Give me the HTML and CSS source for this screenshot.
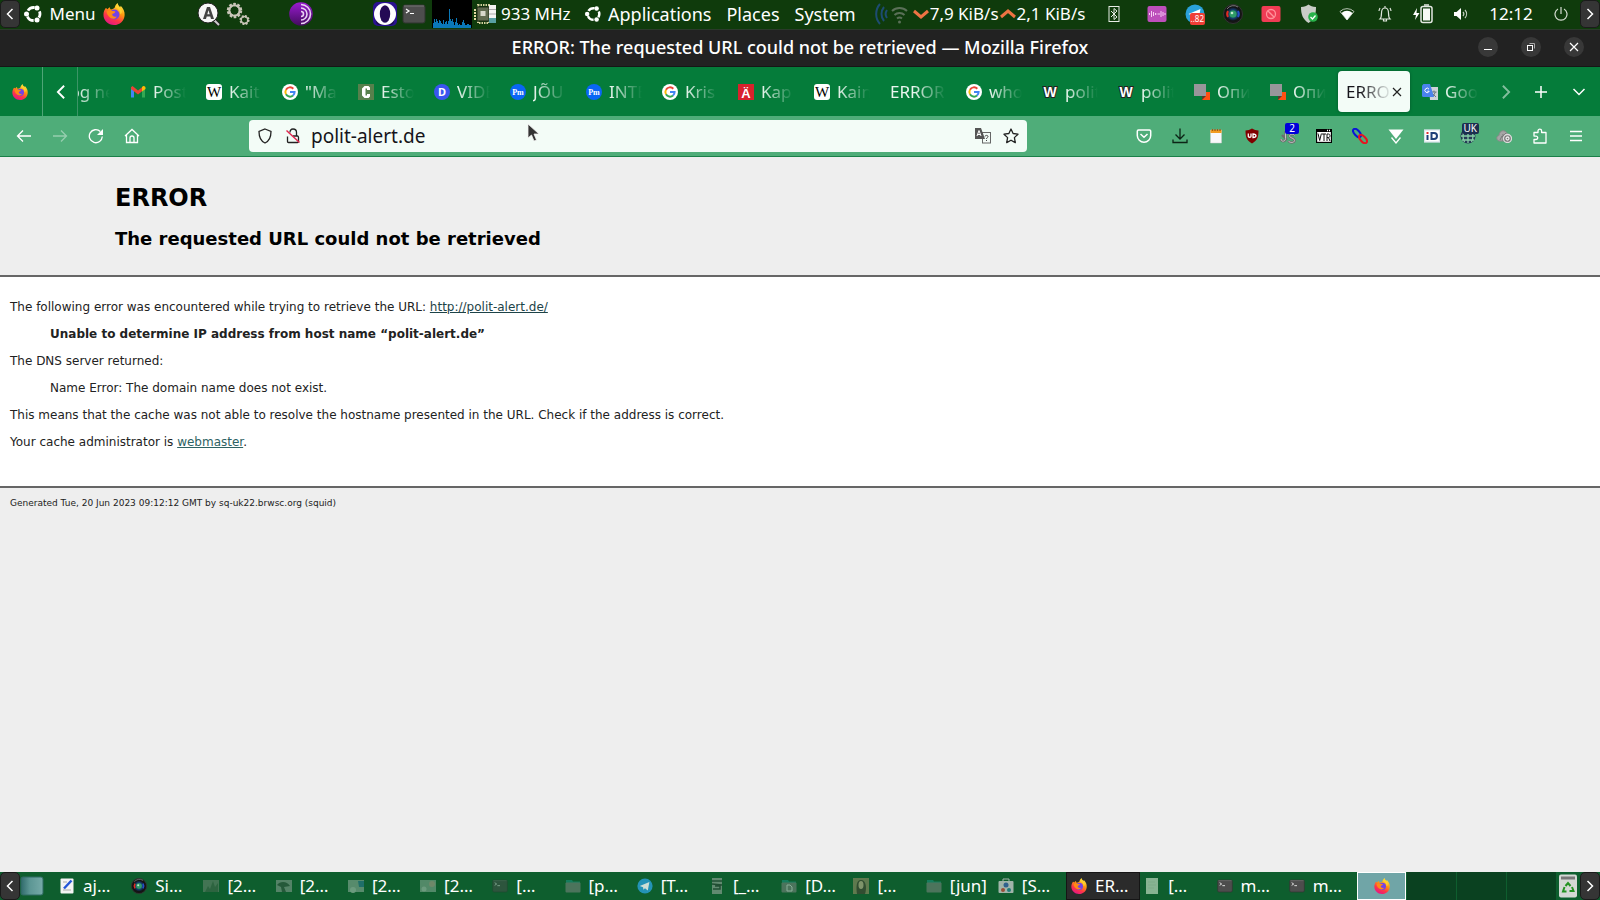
FILE: index.html
```html
<!DOCTYPE html>
<html lang="en">

<head>
  <meta charset="utf-8">
  <meta name="viewport" content="width=device-width, initial-scale=1.0" />
  <title>ERROR: The requested URL could not be retrieved</title>
  <link rel="stylesheet" href="styles.css">
</head>

<body>
  <!-- shared icons -->
  <svg class="defs" width="0" height="0">
    <defs>
      <linearGradient id="ff-body" x1="0.8" y1="0" x2="0.3" y2="1">
        <stop offset="0" stop-color="#fff44f" />
        <stop offset="0.4" stop-color="#ff980e" />
        <stop offset="0.7" stop-color="#ff3647" />
        <stop offset="1" stop-color="#e31587" />
      </linearGradient>
      <linearGradient id="tor-bg" x1="0" y1="0" x2="0" y2="1">
        <stop offset="0" stop-color="#9a1bd0" />
        <stop offset="1" stop-color="#420c5d" />
      </linearGradient>
      <linearGradient id="desk-bg" x1="0" y1="0" x2="1" y2="0">
        <stop offset="0" stop-color="#2f6a6b" />
        <stop offset="0.4" stop-color="#5c9694" />
        <stop offset="1" stop-color="#76aaa8" />
      </linearGradient>
      <radialGradient id="lens">
        <stop offset="0" stop-color="#b9e4c0" />
        <stop offset="0.3" stop-color="#1c8a55" />
        <stop offset="0.65" stop-color="#143a6b" />
        <stop offset="1" stop-color="#101010" />
      </radialGradient>
    </defs>
    <symbol id="firefox" viewBox="0 0 24 24">
      <path fill="url(#ff-body)" d="M3 5.500c.8.200 1.400.700 2 1.300.6-1.200 1.500-1.900 2.500-2.300 0 1 .3 1.800 1 2.500 2-.5 3.300-.8 4.300-2.200C13.200 3 14.200 1.500 16 0c.2 2 1.300 3.100 2.800 4.600l.5-1.600c2.700 2.700 4.500 6 4.300 10C23.400 19.300 18.400 24 12 24S.5 19.200.5 12.800C.5 10 1.500 7.500 3 5.500z" />
      <circle cx="12.500" cy="12.500" r="5.500" fill="#7542e5" />
      <path fill="#ff8a16" d="M4 9c2-1.600 4.300-1.500 6-.2 1.500.2 2.800.2 3.500.7-.6 1.600-2.400 2-3.500 2.400.2 2.500 2.200 3.600 5 2.700-1 3-5.800 3.500-8.300.5C5 13.300 4 11.400 4 9z" />
      <path fill="#ffd22f" d="M13.500 4.500c3 1 5.500 3.500 5.500 8 1.500-1 1.800-3 1.500-4.500C19.500 6 17 5 16 2c-1 .8-1.800 1.500-2.500 2.500z" />
    </symbol>
    <symbol id="ubuntu" viewBox="0 0 20 20">
      <circle cx="10.500" cy="10" r="6.500" fill="none" stroke="#fff" stroke-width="2.800" stroke-dasharray="7.600 6.010" stroke-dashoffset="3.800" />
      <circle cx="3.500" cy="10" r="2.500" fill="#fff" />
      <circle cx="14" cy="4" r="2.500" fill="#fff" />
      <circle cx="14" cy="16" r="2.500" fill="#fff" />
    </symbol>
    <symbol id="chev-left" viewBox="0 0 16 16">
      <path d="M10.500 3l-5 5 5 5" fill="none" stroke="currentColor" stroke-width="1.500" />
    </symbol>
    <symbol id="chev-right" viewBox="0 0 16 16">
      <path d="M5.500 3l5 5-5 5" fill="none" stroke="currentColor" stroke-width="1.500" />
    </symbol>
    <symbol id="terminal" viewBox="0 0 24 20">
      <rect x="1" y="1" width="22" height="18" rx="2" fill="#4d4d4d" stroke="#303530" />
      <path d="M2 2h20" stroke="#777" />
      <path d="M4 5l3 2-3 2M8 9.500h4" fill="none" stroke="#fff" stroke-width="1.200" />
    </symbol>
    <symbol id="camera" viewBox="0 0 20 20">
      <circle cx="10" cy="10" r="9.500" fill="#151515" stroke="#333" />
      <circle cx="10" cy="10" r="7" fill="url(#lens)" />
      <circle cx="10" cy="10" r="3.500" fill="#2f9a68" />
      <circle cx="9" cy="9" r="1.300" fill="#c3ead0" />
      <path d="M5 7a6 6 0 0 0 0 6" fill="none" stroke="#e02c20" stroke-width="2" />
      <path d="M15 7a6 6 0 0 1 0 6" fill="none" stroke="#2450c8" stroke-width="2" />
      <path d="M4 5a8 8 0 0 1 11-2" fill="none" stroke="#777" />
    </symbol>
    <symbol id="telegram" viewBox="0 0 20 20">
      <circle cx="10" cy="10" r="9.500" fill="#2aa1da" />
      <path d="M3.500 10L15.500 5l-2 10.500-3.500-2.600-2 1.800-.4-3.200z" fill="#fff" />
    </symbol>
    <symbol id="google" viewBox="0 0 16 16">
      <circle cx="8" cy="8" r="8" fill="#fff" />
      <path d="M11.300 4.700A4.600 4.600 0 0 0 4 5.700" fill="none" stroke="#ea4335" stroke-width="2" />
      <path d="M4 5.700a4.600 4.600 0 0 0 0 4.600" fill="none" stroke="#fbbc05" stroke-width="2" />
      <path d="M4 10.300a4.600 4.600 0 0 0 7 1.200" fill="none" stroke="#34a853" stroke-width="2" />
      <path d="M8 8h4.600a4.600 4.600 0 0 1-1.600 3.500" fill="none" stroke="#4285f4" stroke-width="2" />
    </symbol>
    <symbol id="folder" viewBox="0 0 16 16">
      <path d="M1 2h6l1 1.500h7V6H1z" fill="#1e9c8c" />
      <rect x="0.500" y="4.500" width="15" height="10" rx="1" fill="#8b8b8b" />
    </symbol>
    <symbol id="overlap" viewBox="0 0 16 16">
      <path d="M8 8h8v8H8z" fill="#ff4f12" />
      <path d="M0 0h12v12H0z" fill="#98969a" />
      <path d="M8 12h4l-4 4z" fill="#5a3a30" />
    </symbol>
  </svg>

  <div class="desktop">
    <header class="panel">
      <button class="panel-arrow" aria-label="Hide panel"><svg width="16" height="16"><use href="#chev-left" /></svg></button>
      <button class="panel-menu main-menu"><svg width="20" height="20"><use href="#ubuntu" /></svg>Menu</button>
      <div class="launchers after-firefox">
        <button class="launcher" aria-label="Firefox"><svg width="22" height="22"><use href="#firefox" /></svg></button>
      </div>
      <div class="launchers after-gears">
        <button class="launcher" aria-label="Search">
          <svg width="24" height="24" viewBox="0 0 24 24"><path d="M17 18l5 5" stroke="#222" stroke-width="4" /><path d="M17 18l5 5" stroke="#ccc" stroke-width="2" /><circle cx="11" cy="11" r="10" fill="#f7f7f7" stroke="#222" /><path d="M6 17l4-12h3l4 12h-3l-.7-2.500H9.700L9 17zM10.300 12.200h2.400l-1.200-4z" fill="#444" fill-rule="evenodd" /></svg>
        </button>
        <button class="launcher" aria-label="Settings">
          <svg width="24" height="24" viewBox="0 0 24 24"><g fill="none"><circle cx="8.500" cy="8.500" r="6" stroke="#c9c5b8" stroke-width="3.500" stroke-dasharray="2.400 1.370" /><circle cx="8.500" cy="8.500" r="5.200" stroke="#c9c5b8" stroke-width="2" /><circle cx="18.500" cy="18" r="3.800" stroke="#c9c5b8" stroke-width="2.600" stroke-dasharray="1.700 1.280" /><circle cx="18.500" cy="18" r="3.400" stroke="#c9c5b8" stroke-width="1.500" /></g></svg>
        </button>
      </div>
      <div class="launchers after-tor">
        <button class="launcher" aria-label="Tor Browser">
          <svg width="24" height="24" viewBox="0 0 24 24"><circle cx="12" cy="12" r="11.800" fill="url(#tor-bg)" /><path d="M12 2.500a9.500 9.500 0 0 1 0 19M12 6a6 6 0 0 1 0 12M12 9.500a2.500 2.500 0 0 1 0 5" fill="none" stroke="#e8d2f2" stroke-width="1.600" /></svg>
        </button>
      </div>
      <div class="launchers">
        <button class="launcher" aria-label="Opera">
          <svg width="24" height="24" viewBox="0 0 24 24"><rect width="24" height="24" rx="5" fill="#2a1290" /><rect x="3" y="6" width="18" height="17" rx="4" fill="#1a0950" /><circle cx="12" cy="12" r="11" fill="#fff" /><ellipse cx="12" cy="12" rx="5.200" ry="8.800" fill="#240a55" /></svg>
        </button>
        <button class="launcher" aria-label="Terminal"><svg width="24" height="20"><use href="#terminal" /></svg></button>
      </div>
      <svg class="load-graph" width="40" height="28" viewBox="0 0 40 28"><rect width="40" height="28" fill="#000" /><path fill="#0a78b8" d="M1 28v-5h1v-4h1v3h1v-3h1v2h1v2h1v-3h1v1h1v2h1v1h1v-4h1v4h1v-2h1v-1h1v3h1v-3h1V9h1v10h1v2h1v-2h1v3h1v3h1v-3h1v-4h1v5h1v2h1v-1h1v1h2v-3h1v-2h1v3h1v2h2v-1h2v1h2v3z" /></svg>
      <div class="cpu">
        <svg width="23" height="20" viewBox="0 0 23 20"><path d="M4 1h11v18H4z" fill="none" stroke="#d3cf9c" stroke-width="2" stroke-dasharray="1.500 1" /><path d="M1 5v11" stroke="#e4dca5" stroke-width="2" stroke-dasharray="2 1" /><rect x="3" y="3" width="12" height="14" fill="#606a50" stroke="#1d2a12" /><rect x="6.500" y="7" width="5" height="5" fill="#d7d7cb" /><path d="M15 1h7v18h-7z" fill="#f4f4f2" /><path d="M15 14h7v5h-7z" fill="#58a0a3" /><path d="M15 5.500h7M15 10h7" stroke="#aaa" /></svg>
        <span>933 MHz</span>
      </div>
      <nav class="panel-nav">
        <button class="panel-menu"><svg width="18" height="18"><use href="#ubuntu" /></svg>Applications</button>
        <button class="panel-menu">Places</button>
        <button class="panel-menu">System</button>
      </nav>
      <div class="network">
        <svg width="36" height="24" viewBox="0 0 36 24" fill="none"><path d="M6 2a15 15 0 0 0 0 20M10 5a11 11 0 0 0 0 14M13 8a7 7 0 0 0 0 8" stroke="#1d4c72" stroke-width="2" /><path d="M18 9a11 11 0 0 1 15 0M20.500 13a7 7 0 0 1 10 0M23 16.500a4 4 0 0 1 5 0" stroke="#5b7058" stroke-width="2" /><circle cx="25.500" cy="20" r="1.500" fill="#5b7058" /></svg>
        <svg width="16" height="16" viewBox="0 0 16 16"><path d="M1 5l7 6 7-6" fill="none" stroke="#ee7343" stroke-width="3" /></svg>
        <span>7,9 KiB/s</span>
        <svg width="16" height="16" viewBox="0 0 16 16"><path d="M1 11l7-6 7 6" fill="none" stroke="#ee7343" stroke-width="3" /></svg>
        <span>2,1 KiB/s</span>
      </div>
      <div class="tray">
        <button class="tray-item" aria-label="Bluetooth"><svg width="12" height="18" viewBox="0 0 12 18" fill="none" stroke="#e8ede6"><rect x="1" y="1.500" width="10" height="15" /><path d="M3 6l6 6-3 2.500v-11L9 6l-6 6" /></svg></button>
        <button class="tray-item" aria-label="Audio"><svg width="20" height="18" viewBox="0 0 20 18"><rect x="0.500" y="1" width="19" height="16" rx="2" fill="#bd4fbb" /><path d="M2.500 8v2M4.500 6v6M6.500 7v4M8.500 8v2M10 8.500v1M12 8v2M14 6v6M16 7v4M18 8v2" stroke="#f5cdf2" /></svg></button>
        <button class="tray-item telegram-item" aria-label="Telegram"><svg width="20" height="20"><use href="#telegram" /></svg><span class="tray-badge">..82</span></button>
        <button class="tray-item" aria-label="Camera"><svg width="20" height="20"><use href="#camera" /></svg></button>
        <button class="tray-item" aria-label="Blocked"><svg width="20" height="18" viewBox="0 0 20 18"><rect x="0.500" y="1" width="19" height="16" rx="2" fill="#ef3c54" /><circle cx="10" cy="9" r="4.500" fill="none" stroke="#ff929b" stroke-width="1.300" /><path d="M7 6l6 6" stroke="#ff929b" stroke-width="1.300" /></svg></button>
        <button class="tray-item" aria-label="Security"><svg width="18" height="20" viewBox="0 0 18 20"><path d="M8.500 0.500c2 1.500 4 2.500 7.500 2.500 0 7-1.500 12-7.500 16C2.500 15 1 10 1 3c3.500 0 5.500-1 7.500-2.500z" fill="#c9ccc7" /><circle cx="13" cy="13" r="4.800" fill="#28b24a" /><path d="M10.500 13l2 2 3-3.500" fill="none" stroke="#fff" stroke-width="1.300" /></svg></button>
        <button class="tray-item" aria-label="Wifi"><svg width="16" height="14" viewBox="0 0 16 14"><path d="M1 4.500a10 10 0 0 1 14 0L8 13z" fill="none" stroke="#b8c4b5" /><path d="M2.500 6a8 8 0 0 1 11 0L8 13z" fill="#fff" /></svg></button>
        <button class="tray-item" aria-label="Notifications"><svg width="14" height="18" viewBox="0 0 14 18" fill="none" stroke="#dfe6dc" stroke-width="1.200"><path d="M2 14c1.500-1.500 1.500-3 1.500-6C3.500 5 5 3 7 3s3.500 2 3.500 5c0 3 0 4.500 1.500 6zM7 1v2M5.500 14v2h3v-2M1 6c0-1 .5-2 1-3M13 6c0-1-.5-2-1-3" /></svg></button>
        <button class="tray-item" aria-label="Battery"><svg width="22" height="20" viewBox="0 0 22 20"><path d="M5 4L1 11h3l-1 5 4.500-7H4.500z" fill="#fff" /><rect x="9" y="2.500" width="11" height="16" rx="2" fill="none" stroke="#e4e8e2" stroke-width="1.500" /><path d="M11 4.500h7v12h-7z" fill="#f6f8f5" /><path d="M12 1h5" stroke="#e4e8e2" stroke-width="1.500" /></svg></button>
        <button class="tray-item" aria-label="Volume"><svg width="16" height="14" viewBox="0 0 16 14"><path d="M1 5h2.500L8 1v12L3.500 9H1z" fill="#fff" /><path d="M10 5a3 3 0 0 1 0 4M12 3a6 6 0 0 1 0 8" fill="none" stroke="#c3cec0" stroke-width="1.200" /></svg></button>
        <time class="clock">12:12</time>
        <button class="tray-item" aria-label="Power"><svg width="14" height="14" viewBox="0 0 14 14" fill="none" stroke="#d5ddd2" stroke-width="1.200"><path d="M4 2a6 6 0 1 0 6 0M7 0v7" /></svg></button>
      </div>
      <button class="panel-arrow" aria-label="Hide panel"><svg width="16" height="16"><use href="#chev-right" /></svg></button>
    </header>

    <div class="titlebar">
      <div class="title">ERROR: The requested URL could not be retrieved — Mozilla Firefox</div>
      <div class="window-buttons">
        <button aria-label="Minimize"><svg width="20" height="20" viewBox="0 0 20 20"><path d="M6 12.500h8" stroke="#fff" /></svg></button>
        <button aria-label="Restore"><svg width="20" height="20" viewBox="0 0 20 20" fill="none"><path d="M8.500 6.500h5v5" stroke="#aaa" /><rect x="6.500" y="8.500" width="5" height="5" stroke="#fff" /></svg></button>
        <button aria-label="Close"><svg width="20" height="20" viewBox="0 0 20 20"><path d="M6 6l8 8M14 6l-8 8" stroke="#fff" stroke-width="1.200" /></svg></button>
      </div>
    </div>

    <div class="tabbar">
      <button class="firefox-view" aria-label="Firefox View"><svg width="16" height="16"><use href="#firefox" /></svg></button>
      <button class="scroll-left" aria-label="Scroll left"><svg width="20" height="20"><use href="#chev-left" /></svg></button>
      <div class="tabs">
        <button class="tab"><span>Blog ne</span></button>
        <button class="tab"><svg width="16" height="16" viewBox="0 0 16 16"><path d="M1 3.500v10h3V6" fill="#4285f4" /><path d="M15 3.500v10h-3V6" fill="#34a853" /><path d="M1 3.200L2.500 2 8 6.500 13 2.500v4L8 10.500 1 5z" fill="#ea4335" /><path d="M12 3l1-.8c1-.6 2.500.3 2.500 1.500V5L12 7.500z" fill="#fbbc04" /></svg><span>Post</span></button>
        <button class="tab"><svg width="16" height="16" viewBox="0 0 16 16"><rect width="16" height="16" rx="3" fill="#fff" /><text class="fav-w" x="8" y="13" text-anchor="middle">W</text></svg><span>Kait</span></button>
        <button class="tab"><svg width="16" height="16"><use href="#google" /></svg><span>"Ma</span></button>
        <button class="tab"><svg width="16" height="16" viewBox="0 0 16 16"><rect width="16" height="16" fill="#57804c" /><path d="M12 6V3.500L10.500 2h-4L4 4.500v7L6.500 14h4L12 12.500V10H9v1.500H7.500v-7H9V6z" fill="#fff" /></svg><span>Esto</span></button>
        <button class="tab"><svg width="16" height="16" viewBox="0 0 16 16"><circle cx="8" cy="8" r="8" fill="#3a55ef" /><text class="fav-d" x="8" y="12" text-anchor="middle">D</text></svg><span>VIDE</span></button>
        <button class="tab"><svg width="16" height="16" viewBox="0 0 16 16"><circle cx="8" cy="8" r="8" fill="#0a66f5" /><text class="fav-pm" x="8" y="11" text-anchor="middle">Pm</text></svg><span>JÕU</span></button>
        <button class="tab"><svg width="16" height="16" viewBox="0 0 16 16"><circle cx="8" cy="8" r="8" fill="#0a66f5" /><text class="fav-pm" x="8" y="11" text-anchor="middle">Pm</text></svg><span>INTE</span></button>
        <button class="tab"><svg width="16" height="16"><use href="#google" /></svg><span>Kris</span></button>
        <button class="tab"><svg width="16" height="16" viewBox="0 0 16 16"><rect width="16" height="16" fill="#d8222c" /><text class="fav-a" x="8" y="14" text-anchor="middle">Ä</text></svg><span>Kap</span></button>
        <button class="tab"><svg width="16" height="16" viewBox="0 0 16 16"><rect width="16" height="16" rx="3" fill="#fff" /><text class="fav-w" x="8" y="13" text-anchor="middle">W</text></svg><span>Kain</span></button>
        <button class="tab"><span>ERROR</span></button>
        <button class="tab"><svg width="16" height="16"><use href="#google" /></svg><span>who</span></button>
        <button class="tab"><svg width="16" height="16" viewBox="0 0 16 16"><text class="fav-who" x="8" y="13" text-anchor="middle">W</text></svg><span>polit</span></button>
        <button class="tab"><svg width="16" height="16" viewBox="0 0 16 16"><text class="fav-who" x="8" y="13" text-anchor="middle">W</text></svg><span>polit</span></button>
        <button class="tab"><svg width="16" height="16"><use href="#overlap" /></svg><span>Опи</span></button>
        <button class="tab"><svg width="16" height="16"><use href="#overlap" /></svg><span>Опи</span></button>
        <button class="tab selected"><span>ERRO</span><svg class="tab-close" width="10" height="10" viewBox="0 0 10 10"><path d="M1 1l8 8M9 1L1 9" stroke="#222" stroke-width="1.200" /></svg></button>
        <button class="tab"><svg width="16" height="16" viewBox="0 0 16 16"><path d="M7 3h9v13H8z" fill="#cdd3d8" /><path d="M9.500 8h5M12 6.500V8M10.500 13l3-5M10.500 9.500l3.500 3.500" stroke="#6b7780" /><path d="M1.500 0H8l4 13H1.500A1.500 1.500 0 0 1 0 11.500v-10z" fill="#4a83ee" /><path d="M7 5.200a2.200 2.200 0 1 0 .2 2H5.300" fill="none" stroke="#fff" /></svg><span>Goo</span></button>
      </div>
      <button class="tab-tool scroll-right" aria-label="Scroll right"><svg width="20" height="20"><use href="#chev-right" /></svg></button>
      <button class="tab-tool" aria-label="New tab"><svg width="14" height="14" viewBox="0 0 14 14"><path d="M7 1v12M1 7h12" stroke="#fff" stroke-width="1.500" /></svg></button>
      <button class="tab-tool all-tabs" aria-label="List all tabs"><svg width="14" height="14" viewBox="0 0 14 14"><path d="M1.500 4L7 9.500 12.500 4" fill="none" stroke="#fff" stroke-width="1.500" /></svg></button>
    </div>

    <div class="toolbar">
      <div class="tools">
        <button class="tool" aria-label="Back"><svg width="16" height="16" viewBox="0 0 16 16"><path d="M15 8H1.500M7 2.500L1.500 8 7 13.500" /></svg></button>
        <button class="tool disabled" aria-label="Forward" disabled><svg width="16" height="16" viewBox="0 0 16 16"><path d="M1 8h13.500M9 2.500L14.500 8 9 13.500" /></svg></button>
        <button class="tool" aria-label="Reload"><svg width="16" height="16" viewBox="0 0 16 16"><path d="M14.300 8.500a6.500 6.500 0 1 1-2-5" /><path d="M15 1v6H9z" fill="#fff" stroke="none" /></svg></button>
        <button class="tool" aria-label="Home"><svg width="16" height="16" viewBox="0 0 16 16"><path d="M1 8l7-6.500L15 8M2.500 7v7.500h11V7M6 14.500V10a2 2 0 0 1 4 0v4.500" /></svg></button>
      </div>
      <div class="urlbar">
        <button aria-label="Tracking protection"><svg width="16" height="16" viewBox="0 0 16 16" fill="none" stroke="#222" stroke-width="1.300"><path d="M8 1l6 2.500C14 9 12.500 13 8 15 3.500 13 2 9 2 3.500z" /></svg></button>
        <button aria-label="Connection not secure"><svg width="16" height="16" viewBox="0 0 16 16" fill="none" stroke="#222" stroke-width="1.300"><path d="M2.500 8.500v5c0 .6.400 1 1 1h9c.6 0 1-.4 1-1v-4c0-.6-.4-1.500-1-1.500H8M5 4.500C5 2.500 6 1 8 1s3.500 1.500 3.500 3.500V8" /><path d="M1.500 2.500l13 12" stroke="#e22850" stroke-width="1.500" /></svg></button>
        <input type="text" value="polit-alert.de" aria-label="Address">
        <button aria-label="Translate page"><svg width="16" height="16" viewBox="0 0 16 16"><rect x="7.500" y="4.500" width="8" height="10.500" fill="#f3fbf7" stroke="#666" /><path d="M10 8.500c0-1.500 3-1.500 3 0 0 1-1.500 1-1.500 2.500M11.500 12v1" fill="none" stroke="#444" /><path d="M0 0h6l4 11H0z" fill="#555" /><path d="M2 8l2-5.500L6 8M2.700 6.500h2.600" fill="none" stroke="#fff" /></svg></button>
        <button aria-label="Bookmark"><svg width="16" height="16" viewBox="0 0 16 16" fill="none" stroke="#222" stroke-width="1.300"><path d="M8 1l2.100 4.500 4.900.7-3.600 3.400.9 5L8 12.200 3.700 14.600l.9-5L1 6.200l4.900-.7z" stroke-linejoin="round" /></svg></button>
      </div>
      <div class="tools">
        <button class="tool" aria-label="Pocket"><svg width="16" height="16" viewBox="0 0 16 16"><path d="M2.500 2h11a1.200 1.200 0 0 1 1.200 1.200V7.500a6.700 6.700 0 0 1-13.400 0V3.200A1.200 1.200 0 0 1 2.500 2zM4.500 6L8 9.300 11.500 6" stroke-width="1.500" /></svg></button>
        <button class="tool" aria-label="Downloads"><svg class="dark" width="16" height="16" viewBox="0 0 16 16"><path d="M8 0.500v10.500M3.500 6.500L8 11l4.500-4.500M1 11.500v3h14v-3" /></svg></button>
        <button class="tool" aria-label="Notes"><svg width="16" height="16" viewBox="0 0 16 16"><path d="M2.500 2h11v13h-11z" fill="#f8f8fa" stroke="#ccc" stroke-width="0.500" /><path d="M2.500 2h11v3h-11z" fill="#f29c20" stroke="none" /><path d="M4.500 1v2M7 1v2M9.500 1v2M12 1v2" stroke="#a05a10" /></svg></button>
        <button class="tool" aria-label="uBlock"><svg width="16" height="16" viewBox="0 0 16 16"><path d="M8 0.500c2 1 4 2 6.500 2 0 6.500-1 10-6.500 13C2.500 12.500 1.500 9 1.500 2.500c2.500 0 4.500-1 6.500-2z" fill="#800000" stroke="none" /><path d="M4.300 5.500v3c0 1 2.700 1 2.700 0v-3M9 6v3.500c4 0 4-3.500 0-3.500z" /></svg></button>
        <button class="tool" aria-label="Scripts"><svg width="16" height="16" viewBox="0 0 16 16"><path d="M5.500 3v7.500c0 3.500-4.500 3.500-4.500.5M14.500 7.500c-1-2-5-1.500-5 .5 0 2.500 5 1.500 5 4.500 0 2.500-5 2.500-6 .5M2 7l5 5" stroke="#6d6d6d" stroke-width="2.400" /><path d="M5.500 3v7.500c0 3.500-4.500 3.500-4.500.5M14.500 7.500c-1-2-5-1.500-5 .5 0 2.500 5 1.500 5 4.500 0 2.500-5 2.500-6 .5" stroke="#c4c4c4" stroke-width="1" /></svg><span class="tool-badge blue">2</span></button>
        <button class="tool" aria-label="VTR"><svg width="16" height="14" viewBox="0 0 16 14"><rect x="0.500" y="0.500" width="15" height="13" fill="#fff" stroke="#000" /><path d="M0 0h16v3H0z" fill="#000" stroke="none" /><path d="M11 1.500h1M13 1.500h1" stroke="#fff" /><path d="M2 4.500l1.700 7 1.700-7M6 5h4M8 5v7M11 12V5h1.500c2 0 2 3.500 0 3.500H11M12.500 8.500L14 12" stroke="#111" stroke-width="1" /></svg></button>
        <button class="tool" aria-label="Links"><svg width="16" height="16" viewBox="0 0 16 16"><ellipse cx="5" cy="5" rx="5" ry="2.600" transform="rotate(48 5 5)" stroke="#0a14d8" stroke-width="2" /><ellipse cx="11" cy="11" rx="5" ry="2.600" transform="rotate(48 11 11)" stroke="#e81420" stroke-width="2" /></svg></button>
        <button class="tool" aria-label="Video download"><svg width="16" height="16" viewBox="0 0 16 16"><path d="M0.500 1.500h15L8 11z" fill="#fff" stroke="none" /><path d="M3.500 9.500L8 15l4.500-5.500" /></svg></button>
        <button class="tool" aria-label="iD"><svg width="16" height="14" viewBox="0 0 16 14"><rect x="0.500" y="1" width="15" height="12" fill="#fff" stroke="#d8e4ea" /><path d="M3.500 6v5" stroke="#1e3f78" stroke-width="2" /><path d="M2.500 4h2" stroke="#e03030" stroke-width="2" /><path d="M7.500 4v6h2.500c4 0 4-6 0-6z" stroke="#1e3f78" stroke-width="2" /></svg></button>
        <button class="tool" aria-label="VPN"><svg width="16" height="16" viewBox="0 0 16 16"><circle cx="8" cy="8" r="7.500" fill="#263a55" stroke="none" /><path d="M8 1v14M1 8h14M2 12h12M4.500 2c-2 4-2 8 0 12M11.500 2c2 4 2 8 0 12" stroke="#86cfa6" /></svg><span class="tool-badge navy">UK</span></button>
        <button class="tool" aria-label="Cloud"><svg width="16" height="14" viewBox="0 0 16 14"><path d="M3 12c-3-1-3-5 0-5.500C3 1 10 0 11 5c4 0 4 5 2 7z" fill="#a5a5a5" stroke="#8a8a8a" stroke-width="1" /><path d="M4 11l2-4M7 12V5M10 4L6 8" stroke="#777" stroke-width="1" /><circle cx="11.500" cy="9.500" r="4" fill="#777" stroke="#ddd" /><circle cx="11.500" cy="9.500" r="1.500" stroke="#eee" /></svg></button>
        <button class="tool" aria-label="Extensions"><svg width="16" height="16" viewBox="0 0 16 16"><path d="M2 6V4.500h4V3a1.800 1.800 0 0 1 3.600 0v1.500H14V15H2v-3.500h2a1.700 1.700 0 0 0 0-3.400H2z" stroke-linejoin="round" /></svg></button>
        <button class="tool" aria-label="Menu"><svg width="16" height="16" viewBox="0 0 16 16"><path d="M2 3.500h12M2 8h12M2 12.500h12" /></svg></button>
      </div>
      <svg class="cursor" width="14" height="20" viewBox="0 0 14 20"><path d="M1 1v14l3.500-3 2.500 6 2.500-1-2.500-6H12z" fill="#333" stroke="#f2f2f2" stroke-width="0.800" /></svg>
    </div>

    <main class="page">
      <div class="titles">
        <h1>ERROR</h1>
        <h2>The requested URL could not be retrieved</h2>
      </div>
      <div class="content">
        <p>The following error was encountered while trying to retrieve the URL: <a href="http://polit-alert.de/" class="active-link">http://polit-alert.de/</a></p>
        <blockquote>
          <p><b>Unable to determine IP address from host name “polit-alert.de”</b></p>
        </blockquote>
        <p>The DNS server returned:</p>
        <blockquote>
          <p>Name Error: The domain name does not exist.</p>
        </blockquote>
        <p>This means that the cache was not able to resolve the hostname presented in the URL. Check if the address is correct.</p>
        <p>Your cache administrator is <a href="mailto:webmaster">webmaster</a>.</p>
      </div>
      <div class="footer">
        <p>Generated Tue, 20 Jun 2023 09:12:12 GMT by sq-uk22.brwsc.org (squid)</p>
      </div>
    </main>

    <footer class="taskbar">
      <button class="panel-arrow" aria-label="Hide panel"><svg width="16" height="16"><use href="#chev-left" /></svg></button>
      <button class="show-desktop" aria-label="Show desktop"><svg width="24" height="20" viewBox="0 0 24 20"><rect x="1" y="1" width="22" height="18" rx="2" fill="url(#desk-bg)" stroke="#2f6b63" /></svg></button>
      <div class="windows">
        <button class="task"><svg width="16" height="16" viewBox="0 0 16 16"><rect x="1.500" y="0.500" width="13" height="15" rx="1" fill="#f4f4f4" /><path d="M4 12h8M4 4h4" stroke="#aaa" /><path d="M5 10.500l7.500-8" stroke="#2456d8" stroke-width="2.500" /></svg>aj…</button>
        <button class="task"><svg width="16" height="16"><use href="#camera" /></svg>Si…</button>
        <button class="task minimized"><svg width="16" height="16" viewBox="0 0 16 16"><path d="M0 2h16v12H0z" fill="#768a78" /><path d="M2 14l3-6 2 3 3-8 2 6 3-4v9z" fill="#4d6b52" /></svg>[2…</button>
        <button class="task minimized"><svg width="16" height="16" viewBox="0 0 16 16"><path d="M0 2h16v12H0z" fill="#9aa8a0" /><path d="M1 7c3-4 10-4 13 1l-6 1 2 5H6l-1-5z" fill="#3c5646" /></svg>[2…</button>
        <button class="task minimized"><svg width="16" height="16" viewBox="0 0 16 16"><path d="M0 2h16v12H0z" fill="#a0b8aa" /><path d="M10 3h6v6h-5z" fill="#3181a5" /><circle cx="5" cy="12" r="3" fill="#c8d8cd" /></svg>[2…</button>
        <button class="task minimized"><svg width="16" height="16" viewBox="0 0 16 16"><path d="M0 2h16v12H0z" fill="#96b5a2" /><circle cx="12" cy="6" r="3" fill="#d0b3a5" /><circle cx="4" cy="11" r="2.500" fill="#c8d8cd" /></svg>[2…</button>
        <button class="task minimized"><svg width="16" height="14"><use href="#terminal" /></svg>[…</button>
        <button class="task minimized"><svg width="16" height="16"><use href="#folder" /></svg>[p…</button>
        <button class="task minimized bright"><svg width="16" height="16"><use href="#telegram" /></svg>[T…</button>
        <button class="task minimized bright"><svg width="16" height="16" viewBox="0 0 16 16"><path d="M3 0h10v16H3z" fill="#769681" /><path d="M3 3h10M3 6l10 1M6 8h5v3H4" stroke="#264b35" stroke-width="1.500" fill="none" /></svg>[_…</button>
        <button class="task minimized"><svg width="16" height="16"><use href="#folder" /><path d="M6 7h3l2 2v4H6z" fill="none" stroke="#fff" /></svg>[D…</button>
        <button class="task minimized bright"><svg width="16" height="16" viewBox="0 0 16 16"><path d="M0 0h16v16H0z" fill="#748257" /><path d="M4 16c-1-6-1-14 4-14s6 8 4 14z" fill="#3a4a32" /><ellipse cx="8" cy="7" rx="2.500" ry="4" fill="#9ba17a" /></svg>[…</button>
        <button class="task minimized"><svg width="16" height="16"><use href="#folder" /></svg>[jun]</button>
        <button class="task minimized bright"><svg width="16" height="16" viewBox="0 0 16 16"><path d="M5 3V1h6v2" fill="none" stroke="#ccc" /><rect x="0.500" y="3" width="15" height="12" rx="1" fill="#c5cac8" /><circle cx="8" cy="7" r="2.500" fill="#3962a5" /><circle cx="5" cy="12" r="2" fill="#ba4a38" /><circle cx="11" cy="12" r="2" fill="#28828c" /></svg>[S…</button>
        <button class="task current"><svg width="16" height="16"><use href="#firefox" /></svg>ER…</button>
        <button class="task minimized bright"><svg width="16" height="16" viewBox="0 0 16 16"><path d="M2 0h12v16H2z" fill="#a6c9ab" /><path d="M4 4h7M4 7h8M4 10h6" stroke="#98bf9f" /></svg>[…</button>
        <button class="task"><svg width="16" height="14"><use href="#terminal" /></svg>m…</button>
        <button class="task"><svg width="16" height="14"><use href="#terminal" /></svg>m…</button>
      </div>
      <div class="workspaces">
        <button class="workspace active" aria-label="Workspace 1"><svg width="16" height="16"><use href="#firefox" /></svg></button>
        <button class="workspace" aria-label="Workspace 2"></button>
        <button class="workspace" aria-label="Workspace 3"></button>
        <button class="workspace" aria-label="Workspace 4"></button>
      </div>
      <button class="trash" aria-label="Trash"><svg width="20" height="24" viewBox="0 0 20 24"><rect x="1" y="0.500" width="18" height="23" rx="2" fill="#d5d8d5" /><rect x="3" y="2.500" width="14" height="3" fill="#777" /><path d="M7.500 12l2.500-3 2.500 3M14 13l1.500 4h-4M8.500 17.500H5L6.500 13" fill="none" stroke="#259222" stroke-width="2" /></svg></button>
      <button class="panel-arrow" aria-label="Hide panel"><svg width="16" height="16"><use href="#chev-right" /></svg></button>
    </footer>
  </div>
</body>

</html>
```
FILE: styles.css
```css
* {
  box-sizing: border-box;
}

body {
  margin: 0px;
  font-family: "Noto Sans", sans-serif;
  font-size: 17px;
  color: #ffffff;
}

button {
  display: flex;
  align-items: center;
  justify-content: center;
  margin: 0px;
  padding: 0px;
  border: none;
  background: none;
  font: inherit;
  color: inherit;
}

svg {
  display: block;
  flex: none;
}

.defs {
  position: absolute;
}

.desktop {
  display: flex;
  flex-direction: column;
  height: 100vh;
}

/* top panel */
.panel {
  display: flex;
  align-items: center;
  height: 30px;
  flex: none;
  padding-bottom: 1px;
  background: #0f3b0c;
  border-bottom: 1px solid #2b3a2b;
  line-height: 26px;
  white-space: nowrap;
}

.panel-arrow {
  width: 20px;
  height: 28px;
  flex: none;
  background: #353535;
  border: 1px solid #1b1b1b;
  border-radius: 5px;
}

.panel-menu {
  gap: 6px;
}

.main-menu {
  width: 79px;
}

.launchers {
  display: flex;
}

.launcher {
  width: 29px;
  height: 28px;
}

.after-firefox {
  margin-right: 66px;
}

.after-gears {
  margin-right: 34px;
}

.after-tor {
  margin-right: 55px;
}

.load-graph {
  margin: 0px 2px 0px 4px;
}

.cpu {
  display: flex;
  align-items: center;
  gap: 4px;
  width: 110px;
}

.panel-nav {
  display: flex;
  gap: 15px;
  font-size: 18px;
}

.network {
  display: flex;
  align-items: center;
  gap: 1px;
  margin-left: 18px;
}

.network svg:first-child {
  margin-right: 2px;
}

.tray {
  display: flex;
  align-items: center;
  margin-left: auto;
}

.tray-item {
  width: 38px;
  height: 28px;
}

.tray-item:first-child {
  width: 48px;
}

.telegram-item {
  position: relative;
}

.tray-badge {
  position: absolute;
  right: 9px;
  bottom: 3px;
  padding: 0px 1px;
  border-radius: 2px;
  background: #ef3e36;
  font-size: 8px;
  line-height: 12px;
}

.clock {
  width: 62px;
  text-align: center;
}

/* window title */
.titlebar {
  display: grid;
  grid-template-columns: 1fr auto 1fr;
  align-items: center;
  height: 37px;
  flex: none;
  padding: 0px 16px 3px;
  background: #222222;
  border-bottom: 1px solid #161616;
}

.title {
  grid-column: 2;
  font-size: 18px;
  font-weight: 500;
  line-height: 24px;
}

.window-buttons {
  display: flex;
  justify-content: flex-end;
  gap: 23px;
}

.window-buttons button {
  width: 20px;
  height: 20px;
  border-radius: 50%;
  background: #383838;
}

/* tabs */
.tabbar {
  display: flex;
  height: 49px;
  flex: none;
  background: #057c3a;
}

.firefox-view {
  width: 43px;
  padding-right: 2px;
  border-right: 1px solid #4fa577;
}

.scroll-left {
  width: 35px;
  padding-left: 2px;
  border-right: 1px solid #3c9466;
}

.tabs {
  display: flex;
  justify-content: flex-end;
  flex: 1;
  min-width: 0;
  overflow: hidden;
}

.tab {
  justify-content: flex-start;
  flex: none;
  width: 72px;
  height: 41px;
  margin: 4px 2px;
  padding: 0px 8px;
  gap: 7px;
  border-radius: 4px;
}

.tab span {
  flex: 1;
  overflow: hidden;
  text-align: left;
  white-space: nowrap;
  color: #eaf6ef;
  -webkit-mask-image: linear-gradient(to left, transparent, #000 32px);
  mask-image: linear-gradient(to left, transparent, #000 32px);
}

.tab.selected {
  gap: 0px;
  background: #f3fcf7;
  box-shadow: 0px 0px 3px #03552a;
}

.tab.selected span {
  color: #15141a;
}

.fav-w {
  font: 15px "Liberation Serif", serif;
}

.fav-d {
  font: bold 11px "Noto Sans", sans-serif;
  fill: #ffffff;
}

.fav-pm {
  font: bold 8px "Liberation Serif", serif;
  fill: #ffffff;
}

.fav-a {
  font: bold 13px "Liberation Sans", sans-serif;
  fill: #ffffff;
}

.fav-who {
  font: bold 14px "Liberation Sans", sans-serif;
  fill: #ffffff;
  stroke: #222222;
  stroke-width: 2px;
  paint-order: stroke;
}

.tab-tool {
  width: 35px;
}

.all-tabs {
  width: 42px;
}

.scroll-right {
  opacity: 0.5;
}

/* navigation toolbar */
.toolbar {
  position: relative;
  display: flex;
  align-items: center;
  gap: 99px;
  height: 41px;
  flex: none;
  padding: 0px 6px;
  background: #4fad79;
  border-bottom: 1px solid #1a8049;
}

.tools {
  display: flex;
}

.tool {
  position: relative;
  width: 36px;
  height: 36px;
}

.tool svg {
  fill: none;
  stroke: #ffffff;
  stroke-width: 1.3px;
}

.tool svg.dark {
  stroke: #0c2416;
}

.tool.disabled {
  opacity: 0.4;
}

.tool-badge {
  position: absolute;
  top: 5px;
  right: 7px;
  min-width: 14px;
  padding: 0px 2px;
  border-radius: 2px;
  font-size: 10px;
  line-height: 11px;
}

.tool-badge.blue {
  background: #0000d9;
}

.tool-badge.navy {
  background: #1c2f4f;
}

.urlbar {
  display: flex;
  align-items: center;
  flex: 1;
  min-width: 0;
  height: 32px;
  padding: 0px 2px;
  border-radius: 4px;
  background: #f3fcf7;
}

.urlbar button {
  width: 28px;
  height: 28px;
}

.urlbar input {
  flex: 1;
  min-width: 0;
  padding: 0px 4px;
  border: none;
  background: none;
  font: inherit;
  font-size: 19px;
  color: #15141a;
}

.cursor {
  position: absolute;
  left: 527px;
  top: 7px;
}

/* error page */
.page {
  flex: 1;
  min-height: 0;
  overflow: hidden;
  background: #eeeeee;
  font-family: "DejaVu Sans", sans-serif;
  font-size: 12px;
  line-height: 15px;
  color: #222222;
}

.titles {
  padding: 27px 10px 25px 115px;
  color: #000000;
}

.titles h1 {
  margin: 0px 0px 16px;
  font-size: 24px;
  line-height: 28px;
}

.titles h2 {
  margin: 0px;
  font-size: 18px;
  line-height: 22px;
}

.content {
  padding: 11px 10px 24px;
  border-top: 2px solid #666666;
  border-bottom: 2px solid #666666;
  background: #ffffff;
}

.content p {
  margin: 12px 0px;
}

.content blockquote {
  margin: 12px 40px;
}

.content a {
  color: #2e6263;
}

.content a.active-link {
  color: #1d4348;
}

.footer {
  padding: 9px 10px;
  font-size: 9px;
  line-height: 12px;
}

.footer p {
  margin: 0px;
}

/* bottom panel */
.taskbar {
  display: flex;
  align-items: center;
  height: 28px;
  flex: none;
  background: #0e5e2e;
  line-height: 26px;
}

.show-desktop {
  width: 35px;
  justify-content: flex-start;
}

.windows {
  display: flex;
  flex: 1;
  min-width: 0;
}

.task {
  justify-content: flex-start;
  flex: 1;
  min-width: 0;
  height: 28px;
  padding: 0px 4px;
  gap: 8px;
  white-space: nowrap;
}

.task.minimized svg {
  opacity: 0.5;
}

.task.minimized.bright svg {
  opacity: 0.8;
}

.task.current {
  background: #2b2b2b;
  border: 1px solid #151515;
}

.workspaces {
  display: flex;
  gap: 1px;
}

.workspace {
  width: 49px;
  height: 28px;
  background: #0a4120;
}

.workspace.active {
  background: #70a5a7;
  border: 1px solid #ffffff;
}

.trash {
  width: 24px;
}
```
